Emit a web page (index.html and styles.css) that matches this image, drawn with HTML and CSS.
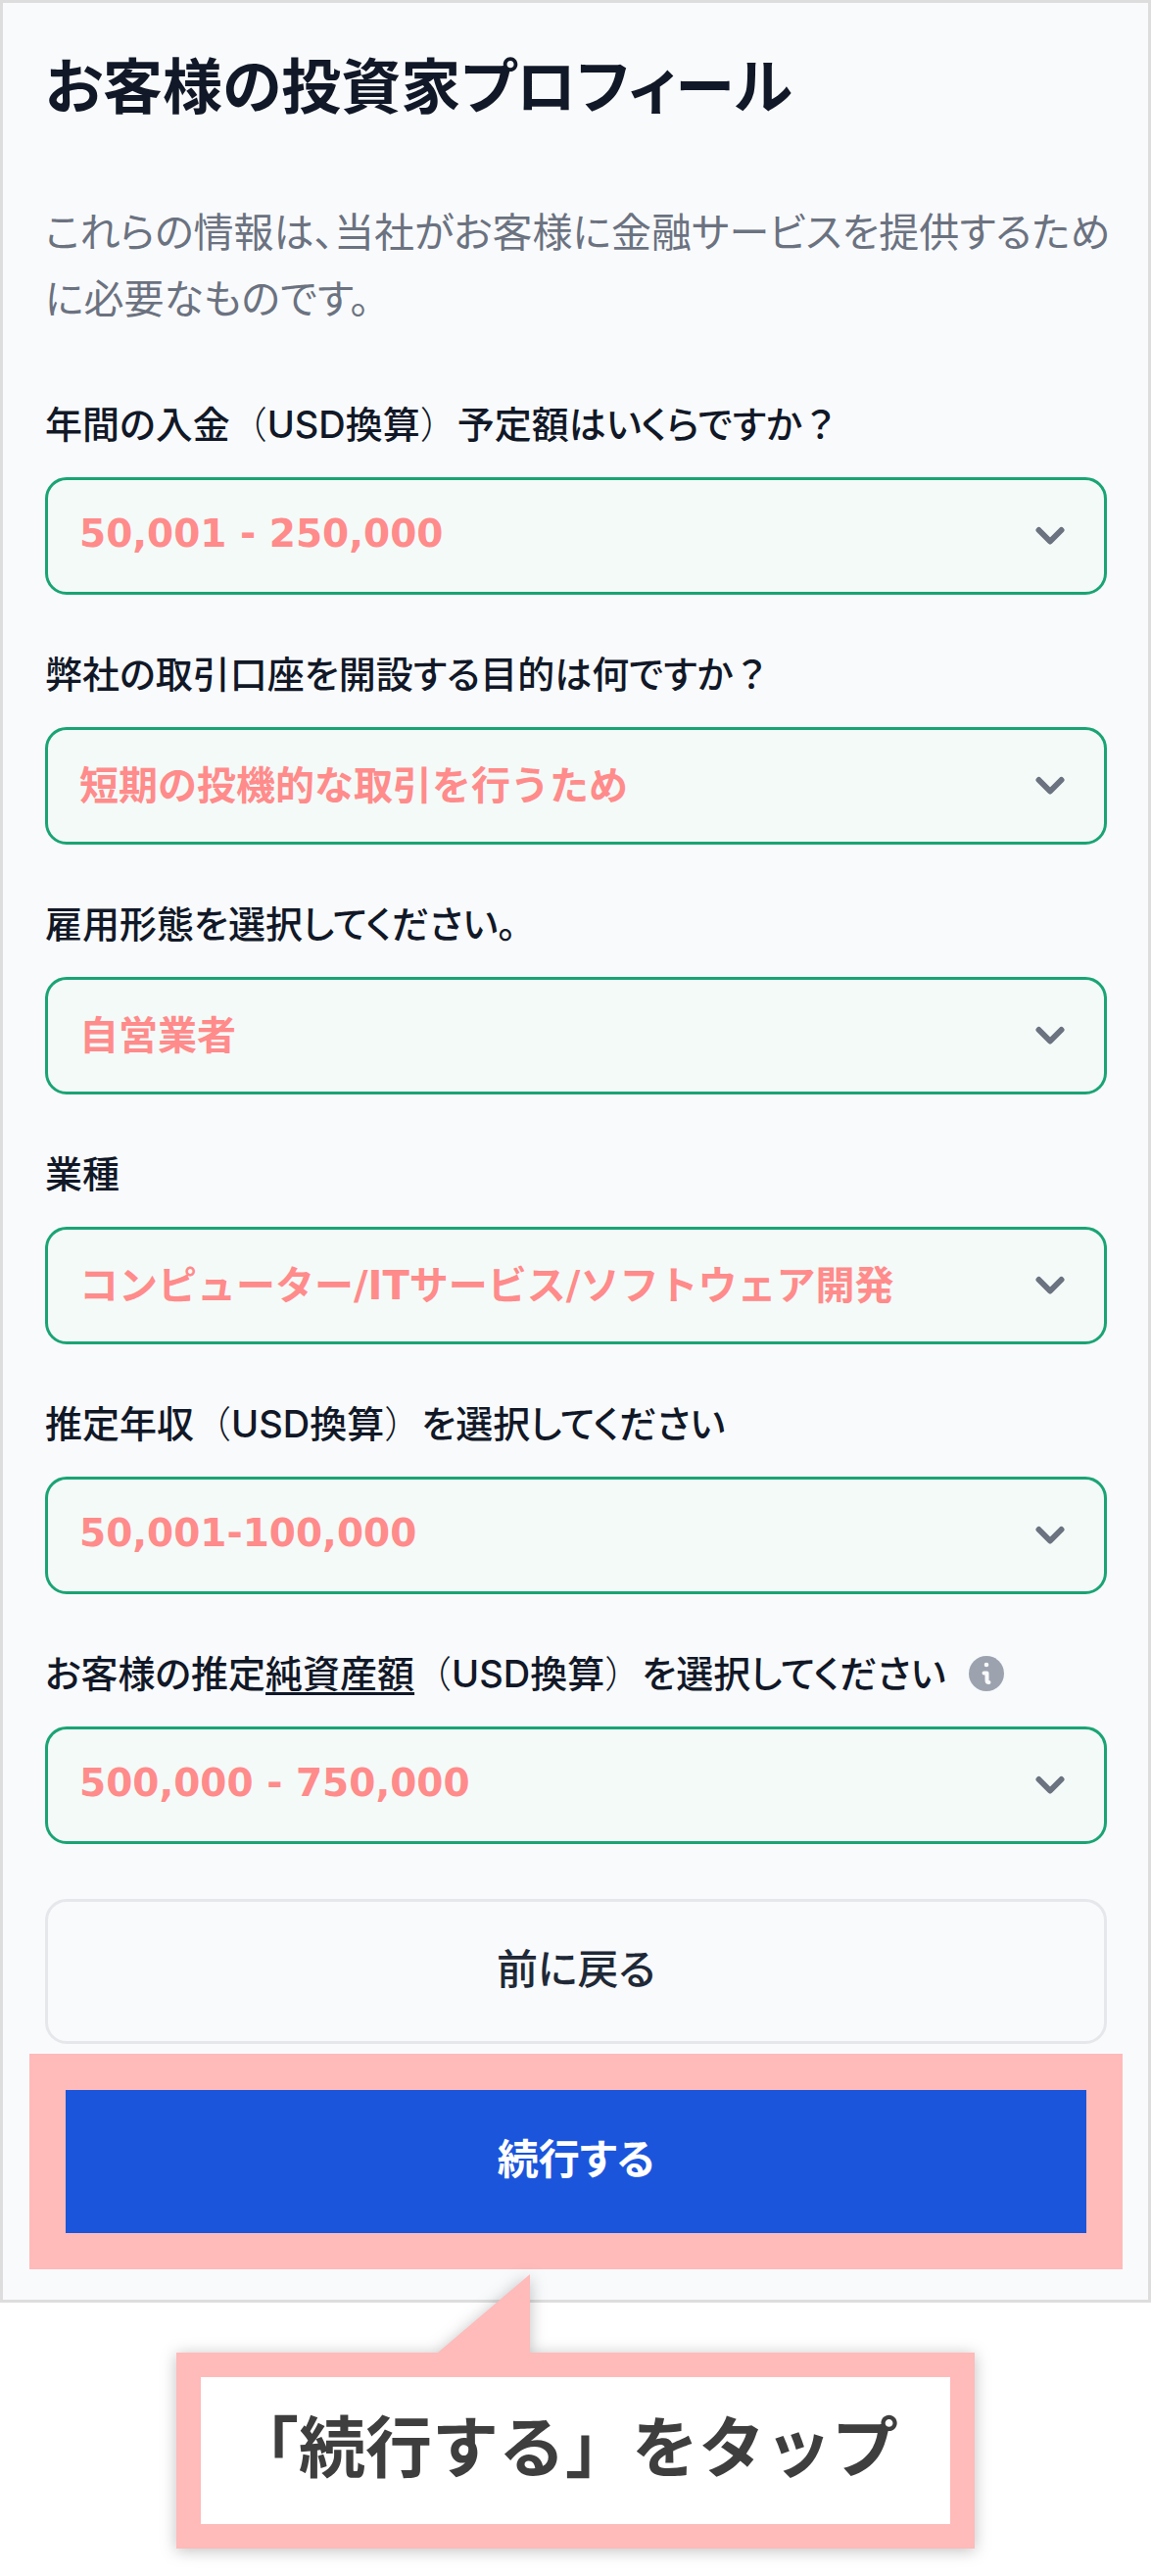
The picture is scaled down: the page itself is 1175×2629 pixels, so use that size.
FILE: index.html
```html
<!DOCTYPE html>
<html lang="ja">
<head>
<meta charset="utf-8">
<meta name="viewport" content="width=device-width, initial-scale=1">
<title>お客様の投資家プロフィール</title>
<link rel="stylesheet" href="styles.css">
</head>
<body>
<svg class="sprite" aria-hidden="true">
  <symbol id="chevron" viewBox="0 0 30 20"><path d="M3.500 4 L15 15.500 L26.500 4" fill="none" stroke="currentColor" stroke-width="6" stroke-linecap="round" stroke-linejoin="round"/></symbol>
</svg>
<main class="panel">
  <h1 class="title">お客様の投資家プロフィール</h1>
  <p class="lead">これらの情報は、当社がお客様に金融サービスを提供するために必要なものです。</p>
  <form class="form">
    <div class="field">
      <label class="label" for="deposit">年間の入金<span class="paren">（</span>USD換算<span class="paren">）</span>予定額はいくらですか<span class="full">？</span></label>
      <div class="control">
        <select class="select number" id="deposit"><option>50,001 - 250,000</option></select>
        <svg class="chevron" aria-hidden="true"><use href="#chevron"/></svg>
      </div>
    </div>
    <div class="field">
      <label class="label" for="purpose">弊社の取引口座を開設する目的は何ですか<span class="full">？</span></label>
      <div class="control">
        <select class="select" id="purpose"><option>短期の投機的な取引を行うため</option></select>
        <svg class="chevron" aria-hidden="true"><use href="#chevron"/></svg>
      </div>
    </div>
    <div class="field">
      <label class="label" for="employment">雇用形態を選択してください。</label>
      <div class="control">
        <select class="select" id="employment"><option>自営業者</option></select>
        <svg class="chevron" aria-hidden="true"><use href="#chevron"/></svg>
      </div>
    </div>
    <div class="field">
      <label class="label" for="industry">業種</label>
      <div class="control">
        <select class="select" id="industry"><option>コンピューター/ITサービス/ソフトウェア開発</option></select>
        <svg class="chevron" aria-hidden="true"><use href="#chevron"/></svg>
      </div>
    </div>
    <div class="field">
      <label class="label" for="income">推定年収<span class="paren">（</span>USD換算<span class="paren">）</span>を選択してください</label>
      <div class="control">
        <select class="select number" id="income"><option>50,001-100,000</option></select>
        <svg class="chevron" aria-hidden="true"><use href="#chevron"/></svg>
      </div>
    </div>
    <div class="field">
      <div class="label-row">
        <label class="label" for="assets">お客様の推定<span class="term">純資産額</span><span class="paren">（</span>USD換算<span class="paren">）</span>を選択してください</label>
        <svg class="info" viewBox="0 0 36 36" aria-hidden="true"><circle cx="18" cy="18" r="18" fill="#9ca3af"/><circle cx="18" cy="9" r="2.300" fill="#f9fafb"/><path d="M15.500 17.500 H18.500 V25 Q18.500 27 20.500 27" fill="none" stroke="#f9fafb" stroke-width="4" stroke-linecap="round" stroke-linejoin="round"/></svg>
      </div>
      <div class="control">
        <select class="select number" id="assets"><option>500,000 - 750,000</option></select>
        <svg class="chevron" aria-hidden="true"><use href="#chevron"/></svg>
      </div>
    </div>
    <button class="back" type="button">前に戻る</button>
    <div class="highlight"><button class="next" type="submit">続行する</button></div>
  </form>
</main>
<aside class="callout">
  <p class="callout-text">「続行する」をタップ</p>
  <svg class="pointer" viewBox="0 0 94 80" aria-hidden="true"><path d="M94 0 V80 H0 Z" fill="#ffbaba"/></svg>
</aside>
</body>
</html>
```
FILE: styles.css
```css
* { box-sizing: border-box; }

body {
  margin: 0;
  background: #fff;
  color: #111827;
  font-family: Inter, "Noto Sans CJK JP", sans-serif;
}

.sprite { display: none; }

.panel {
  padding: 46px 42px 31px 43px;
  border: 3px solid #ddd;
  background: #f9fafc;
  font-feature-settings: "palt";
}

.title {
  margin: 0;
  font-size: 61px;
  font-weight: 700;
  line-height: 80px;
}

.lead {
  margin: 74px -8px 64px 0;
  color: #6b7280;
  font-size: 41px;
  font-weight: 400;
  line-height: 68px;
}

.form, .field { display: flex; flex-direction: column; }

.field { gap: 24px; margin-bottom: 51px; }

.label {
  font-size: 38px;
  font-weight: 500;
  line-height: 60px;
}

.full, .paren { font-feature-settings: normal; }
.paren { font-weight: 300; }

.label-row { display: flex; align-items: center; gap: 24px; }

.term { text-decoration: underline; text-decoration-thickness: 3px; text-underline-offset: 5px; }

.info { width: 36px; height: 36px; }

.control { display: grid; align-items: center; }

.control > * { grid-area: 1 / 1; }

.select {
  width: 100%;
  height: 120px;
  padding: 0 90px 0 32px;
  appearance: none;
  border: 3px solid #1aa474;
  border-radius: 22px;
  background: #f4faf8;
  color: #ff8b8b;
  font-family: "DejaVu Sans", "Noto Sans CJK JP", sans-serif;
  font-size: 40px;
  font-weight: 700;
  font-feature-settings: normal;
}

.number { padding-bottom: 6px; font-size: 39px; }

.chevron {
  justify-self: end;
  width: 30px;
  height: 20px;
  margin-right: 43px;
  color: #6b7280;
  pointer-events: none;
}

.back, .next {
  padding: 0 0 12px;
  font-family: inherit;
  font-size: 42px;
  font-weight: 500;
  font-feature-settings: "palt";
}

.back {
  height: 148px;
  margin-top: 5px;
  border: 3px solid #e5e7eb;
  border-radius: 22px;
  background: transparent;
  color: #1f2937;
}

.highlight {
  margin: 10px -16px 0;
  padding: 37px;
  background: #ffbaba;
}

.next {
  display: block;
  width: 100%;
  height: 146px;
  border: 0;
  background: #1b55dc;
  color: #fff;
  font-weight: 700;
}

.callout {
  position: relative;
  width: fit-content;
  margin: 51px auto 28px;
  border: 25px solid #ffbaba;
  background: #fff;
  filter: drop-shadow(0 2px 8px rgb(0 0 0 / 25%));
}

.callout-text {
  margin: 0;
  padding: 22px 53px 28px 32px;
  color: #3e3e3e;
  font-size: 68px;
  font-weight: 700;
  line-height: 100px;
}

.pointer {
  position: absolute;
  right: 429px;
  bottom: 175px;
  width: 94px;
  height: 80px;
}
```
